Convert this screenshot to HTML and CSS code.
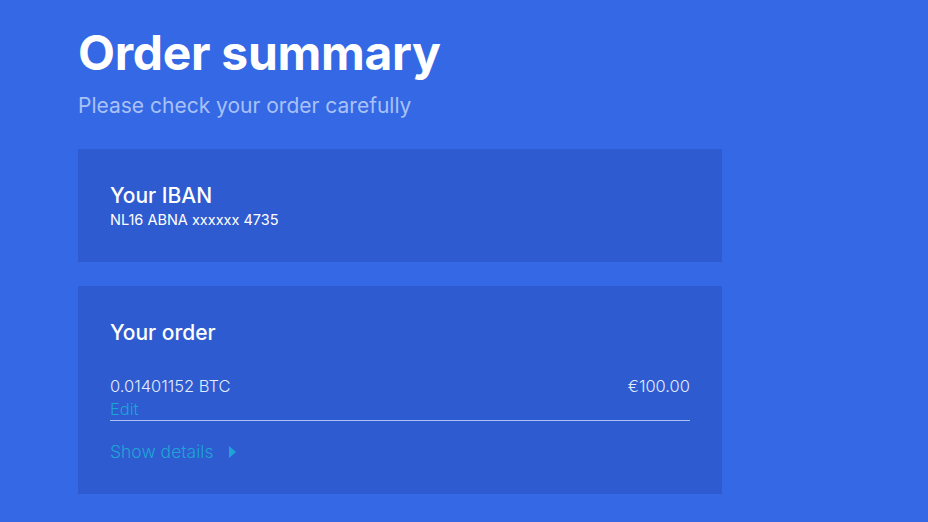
FILE: index.html
```html
<!DOCTYPE html>
<html lang="en">
<head>
<meta charset="utf-8">
<link rel="stylesheet" href="styles.css">
</head>
<body>
<main class="page">
  <h1 class="title">Order summary</h1>
  <p class="subtitle">Please check your order carefully</p>
  <section class="card card-iban">
    <h2 class="card-title">Your IBAN</h2>
    <p class="iban">NL16 ABNA xxxxxx 4735</p>
  </section>
  <section class="card card-order">
    <h2 class="card-title">Your order</h2>
    <div class="order-row">
      <div class="order-left">
        <span class="amount">0.01401152 BTC</span>
        <a class="edit">Edit</a>
      </div>
      <span class="price">€100.00</span>
    </div>
    <a class="details">Show details <svg class="caret" width="7" height="12" viewBox="0 0 7 12"><path d="M0 0 L7 6 L0 12 Z" fill="#1ea5d6"/></svg></a>
  </section>
</main>
</body>
</html>
```
FILE: styles.css
```css
html, body {
  margin: 0;
  padding: 0;
  background: #3468e4;
}
body {
  font-family: Inter, Lato, sans-serif;
  color: #fff;
}
.page {
  width: 644px;
  padding: 24px 0 0 78px;
}
.title {
  margin: 0;
  font-size: 48px;
  font-weight: 700;
  line-height: 58px;
  letter-spacing: -0.3px;
}
.subtitle {
  margin: 12px 0 0;
  font-size: 21px;
  line-height: 24px;
  color: #a9c1f6;
}
.card {
  background: #2e5bcf;
  padding: 0 32px;
  box-sizing: border-box;
}
.card-iban {
  margin-top: 31px;
  height: 113px;
  padding-top: 35px;
}
.card-order {
  margin-top: 24px;
  height: 208px;
  padding-top: 35px;
}
.card-title {
  margin: 0;
  font-size: 21px;
  font-weight: 500;
  line-height: 24px;
}
.iban {
  margin: 3px 0 0;
  font-size: 14.5px;
  line-height: 18px;
}
.order-row {
  margin-top: 30px;
  display: flex;
  justify-content: space-between;
  align-items: flex-start;
  border-bottom: 1px solid #a9c1f6;
  padding-bottom: 0;
}
.order-left {
  display: flex;
  flex-direction: column;
}
.amount, .price {
  font-size: 16.5px;
  font-weight: 300;
  line-height: 23px;
  color: #e3ebfc;
}
.edit {
  font-size: 16.5px;
  font-weight: 300;
  line-height: 22px;
  color: #1ea5d6;
}
.details {
  display: inline-flex;
  align-items: center;
  gap: 16px;
  margin-top: 20px;
  font-size: 17.5px;
  font-weight: 300;
  line-height: 22px;
  color: #1ea5d6;
}
```
